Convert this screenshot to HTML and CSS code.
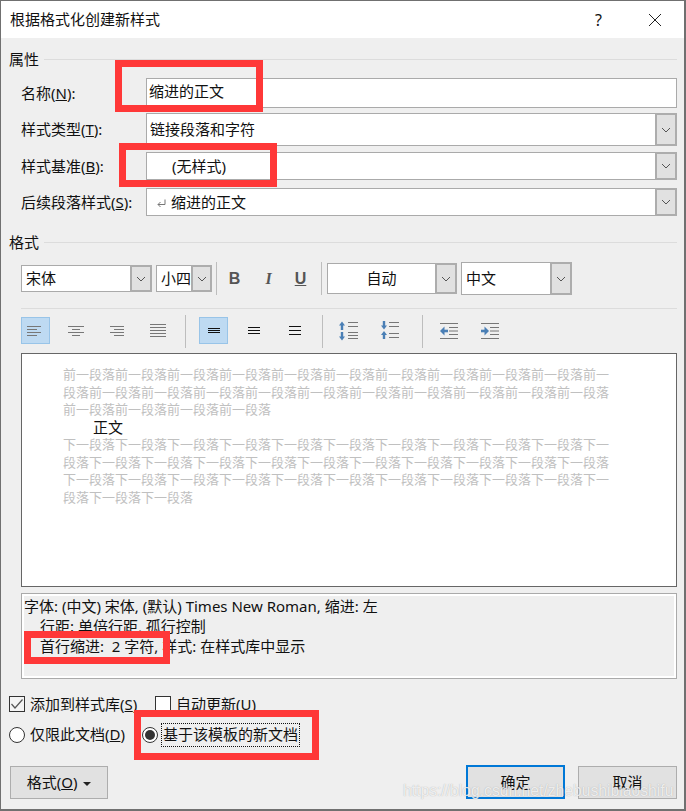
FILE: index.html
```html
<!DOCTYPE html>
<html lang="zh-CN">
<head>
  <meta charset="UTF-8" />
  <title>根据格式化创建新样式</title>
  <link rel="stylesheet" href="styles.css">
</head>
<body>
  <div class="dialog">
    <div class="titlebar">
      <span class="title">根据格式化创建新样式</span>
      <span class="help">?</span>
      <svg class="close" width="14" height="14" viewBox="0 0 14 14"><path d="M1 1L13 13M13 1L1 13" stroke="#222" stroke-width="1" fill="none"/></svg>
    </div>

    <div class="content">
      <div class="group-head"><span>属性</span><i></i></div>
      <div class="props">
        <div class="prop-row name-row">
          <label class="prop-label">名称(<u>N</u>):</label>
          <div class="field name-field">缩进的正文</div>
        </div>
        <div class="prop-row type-row">
          <label class="prop-label">样式类型(<u>T</u>):</label>
          <div class="field select"><span>链接段落和字符</span><b class="arrow"><svg width="10" height="6" viewBox="0 0 10 6"><path d="M1 1L5 5L9 1" stroke="#555" fill="none"/></svg></b></div>
        </div>
        <div class="prop-row base-row">
          <label class="prop-label">样式基准(<u>B</u>):</label>
          <div class="field select"><span class="pad-none">(无样式)</span><b class="arrow"><svg width="10" height="6" viewBox="0 0 10 6"><path d="M1 1L5 5L9 1" stroke="#555" fill="none"/></svg></b></div>
        </div>
        <div class="prop-row next-row">
          <label class="prop-label">后续段落样式(<u>S</u>):</label>
          <div class="field select"><span><svg class="para" width="9" height="9" viewBox="0 0 9 9"><path d="M8 0.5V5.5H1M3.5 3L1 5.5L3.5 8" stroke="#777" fill="none"/></svg>缩进的正文</span><b class="arrow"><svg width="10" height="6" viewBox="0 0 10 6"><path d="M1 1L5 5L9 1" stroke="#555" fill="none"/></svg></b></div>
        </div>
      </div>

      <div class="group-head format-head"><span>格式</span><i></i></div>
      <div class="font-row">
        <div class="field select font-name"><span>宋体</span><b class="arrow"><svg width="10" height="6" viewBox="0 0 10 6"><path d="M1 1L5 5L9 1" stroke="#555" fill="none"/></svg></b></div>
        <div class="field select font-size"><span>小四</span><b class="arrow"><svg width="10" height="6" viewBox="0 0 10 6"><path d="M1 1L5 5L9 1" stroke="#555" fill="none"/></svg></b></div>
        <i class="vsep"></i>
        <span class="txt-btn bold">B</span>
        <span class="txt-btn italic">I</span>
        <span class="txt-btn under">U</span>
        <i class="vsep"></i>
        <div class="field select color-sel"><span>自动</span><b class="arrow"><svg width="10" height="6" viewBox="0 0 10 6"><path d="M1 1L5 5L9 1" stroke="#555" fill="none"/></svg></b></div>
        <div class="field select lang-sel"><span>中文</span><b class="arrow"><svg width="10" height="6" viewBox="0 0 10 6"><path d="M1 1L5 5L9 1" stroke="#555" fill="none"/></svg></b></div>
      </div>
      <div class="hline"></div>
      <div class="para-row">
        <span class="tool on tight shift"><svg width="14" height="10" viewBox="0 0 14 10"><path d="M0 .5H14M0 3.5H10M0 6.5H14M0 9.5H10" stroke="#777"/></svg></span>
        <span class="tool"><svg width="16" height="10" viewBox="0 0 16 10"><path d="M0 .5H16M4 3.5H12M0 6.5H16M4 9.5H12" stroke="#777"/></svg></span>
        <span class="tool"><svg width="14" height="10" viewBox="0 0 14 10"><path d="M0 .5H14M4 3.5H14M0 6.5H14M4 9.5H14" stroke="#777"/></svg></span>
        <span class="tool"><svg width="16" height="13" viewBox="0 0 16 13"><path d="M0 .5H16M0 3.5H16M0 6.5H16M0 9.5H16M0 12.5H16" stroke="#777"/></svg></span>
        <i class="vsep tall"></i>
        <span class="tool on tight"><svg width="12" height="5" viewBox="0 0 12 5"><path d="M0 .5H12M0 2.5H12M0 4.5H12" stroke="#111"/></svg></span>
        <span class="tool"><svg width="12" height="7" viewBox="0 0 12 7"><path d="M0 .5H12M0 3.5H12M0 6.5H12" stroke="#111"/></svg></span>
        <span class="tool"><svg width="12" height="9" viewBox="0 0 12 9"><path d="M0 .5H12M0 4.5H12M0 8.5H12" stroke="#111"/></svg></span>
        <i class="vsep tall close-right"></i>
        <span class="tool"><svg width="19" height="20" viewBox="0 0 19 20"><path d="M3 3V9M3 11V17" stroke="#4a7fb5" stroke-width="2.4"/><path d="M0 4.5L3 .5L6 4.5ZM0 15.5L3 19.5L6 15.5Z" fill="#4a7fb5"/><path d="M9 1.5H19M9 5.5H19M9 11.5H19M9 14.5H19M9 17.5H19" stroke="#777"/></svg></span>
        <span class="tool last"><svg width="18" height="19" viewBox="0 0 18 19"><path d="M3 0V5M3 13V18" stroke="#4a7fb5" stroke-width="2.4"/><path d="M0 4.5H6L3 8.5ZM0 14H6L3 10Z" fill="#4a7fb5"/><path d="M8 1.5H18M8 5.5H18M8 12.5H18M8 16.5H18" stroke="#777"/></svg></span>
        <i class="vsep tall close-right"></i>
        <span class="tool"><svg width="18" height="16" viewBox="0 0 18 16"><path d="M0 .5H18M9 4.5H18M9 8H18M9 11.5H18M0 15.5H18" stroke="#777"/><path d="M8 8H3" stroke="#4a7fb5" stroke-width="2.6"/><path d="M0 8L4.5 3.5V12.5Z" fill="#4a7fb5"/></svg></span>
        <span class="tool"><svg width="18" height="16" viewBox="0 0 18 16"><path d="M0 .5H18M9 4.5H18M9 8H18M9 11.5H18M0 15.5H18" stroke="#777"/><path d="M0 8H5" stroke="#4a7fb5" stroke-width="2.6"/><path d="M8 8L3.5 3.5V12.5Z" fill="#4a7fb5"/></svg></span>
      </div>

      <div class="preview">
        <p class="ghost">前一段落前一段落前一段落前一段落前一段落前一段落前一段落前一段落前一段落前一段落前一段落前一段落前一段落前一段落前一段落前一段落前一段落前一段落前一段落前一段落前一段落前一段落前一段落前一段落前一段落</p>
        <p class="sample">正文</p>
        <p class="ghost">下一段落下一段落下一段落下一段落下一段落下一段落下一段落下一段落下一段落下一段落下一段落下一段落下一段落下一段落下一段落下一段落下一段落下一段落下一段落下一段落下一段落下一段落下一段落下一段落下一段落下一段落下一段落下一段落下一段落下一段落下一段落下一段落下一段落下一段落</p>
      </div>

      <div class="desc">
        <div>字体: (中文) 宋体, (默认) Times New Roman, 缩进: 左</div>
        <div class="ind">行距: 单倍行距, 孤行控制</div>
        <div class="ind">首行缩进:&nbsp; 2 字符, 样式: 在样式库中显示</div>
      </div>

      <div class="opts">
        <span class="check on"><svg width="14" height="12" viewBox="0 0 14 12"><path d="M1.5 6L5 10L12.5 1.5" stroke="#555" stroke-width="1.2" fill="none"/></svg></span>
        <span class="opt-text first-check">添加到样式库(<u>S</u>)</span>
        <span class="check"></span>
        <span class="opt-text">自动更新(<u>U</u>)</span>
      </div>
      <div class="opts radios">
        <span class="radio"></span>
        <span class="opt-text first-radio">仅限此文档(<u>D</u>)</span>
        <span class="radio on"></span>
        <span class="opt-text focus">基于该模板的新文档</span>
      </div>

      <div class="footer">
        <button class="btn fmt">格式(<u>O</u>) <em class="caret"></em></button>
        <button class="btn ok">确定</button>
        <button class="btn">取消</button>
      </div>
    </div>

    <!-- red marks drawn on top of the screenshot -->
    <span class="mark m1"></span>
    <span class="mark m2"></span>
    <span class="mark m3"></span>
    <span class="mark m4"></span>
    <span class="watermark">https://blog.csdn.net/zhebushibiaoshifu</span>
  </div>
</body>
</html>
```
FILE: styles.css
```css
* {
  box-sizing: border-box;
}

body {
  margin: 0;
  width: 686px;
  height: 811px;
  overflow: hidden;
  font-family: "Noto Sans", "Noto Sans CJK SC", sans-serif;
  font-size: 15px;
  color: #111;
}

.dialog {
  position: relative;
  width: 686px;
  height: 811px;
  background: #efefef;
  border: 1px solid #707070;
  border-width: 1px 2px 2px 1px;
}

.titlebar {
  height: 37px;
  background: #fff;
  display: flex;
  align-items: center;
  padding-left: 9px;
}

.title {
  flex: 1;
  padding-bottom: 2px;
}

.help {
  font-size: 16px;
  margin-right: 46px;
}

.close {
  margin-right: 22px;
}

.content {
  padding: 0 7px 0 8px;
}

.group-head {
  display: flex;
  align-items: center;
  height: 22px;
  margin-top: 10px;
}

.group-head span {
  padding-bottom: 2px;
}

.group-head i {
  flex: 1;
  height: 1px;
  background: #dcdcdc;
  margin-left: 5px;
}

.props {
  margin-top: 8px;
}

.prop-row {
  display: flex;
  align-items: center;
}

.name-row {
  height: 30px;
  margin-bottom: 5px;
}

.type-row {
  height: 33px;
  margin-bottom: 6px;
}

.base-row {
  height: 28px;
  margin-bottom: 8px;
}

.next-row {
  height: 28px;
}

.prop-label {
  width: 137px;
  padding: 0 0 2px 12px;
  white-space: pre;
}

.prop-row .field {
  flex: 1;
  align-self: stretch;
}

.field {
  background: #fff;
  border: 1px solid #aaa;
  display: flex;
  align-items: center;
}

.select {
  justify-content: space-between;
}

.select > span {
  flex: 1;
  white-space: nowrap;
  padding-bottom: 2px;
}

.name-field {
  padding: 0 0 5px 2px;
}

.type-row .select {
  padding-left: 3px;
}

.pad-none {
  padding-left: 25px;
}

.para {
  margin: 0 5px 0 10px;
}

.arrow {
  width: 22px;
  align-self: stretch;
  margin: -1px -1px -1px 0;
  background: #e1e1e1;
  border: 2px solid #adadad;
  display: flex;
  align-items: center;
  justify-content: center;
}

.format-head {
  margin-top: 15px;
}

.font-row {
  display: flex;
  align-items: center;
  margin-top: 9px;
  height: 33px;
  padding-left: 12px;
}

.font-name {
  width: 131px;
  height: 27px;
  padding-left: 4px;
  margin-right: 4px;
}

.font-size {
  width: 56px;
  height: 27px;
  padding-left: 4px;
}

.font-size .arrow {
  width: 21px;
}

.vsep {
  width: 1px;
  height: 33px;
  background: #bdbdbd;
  margin-left: 4px;
}

.txt-btn {
  width: 33px;
  text-align: center;
  font: bold 16px "Liberation Sans", sans-serif;
  color: #555;
  margin-left: 1px;
}

.italic {
  font-style: italic;
  font-family: "Liberation Serif", serif;
}

.under {
  text-decoration: underline;
  margin-left: -1px;
}

.color-sel {
  width: 130px;
  height: 31px;
  margin-left: 5px;
  text-align: center;
}

.lang-sel {
  width: 111px;
  height: 33px;
  margin-left: 4px;
  padding-left: 4px;
}

.hline {
  height: 1px;
  background: #dcdcdc;
  margin: 13px 0 0 12px;
}

.para-row {
  display: flex;
  align-items: center;
  height: 33px;
  padding-left: 12px;
  margin-top: 6px;
}

.tool {
  width: 29px;
  height: 27px;
  margin: 0 12px 2px 0;
  display: flex;
  align-items: center;
  justify-content: center;
  border: 1px solid transparent;
}

.tool.tight {
  margin-right: 11px;
}

.tool.shift {
  padding-right: 3px;
}

.tool.last {
  margin-right: 17px;
}

.tool.on {
  background: #bedaf2;
  border-color: #98c4e8;
}

.vsep.tall {
  margin: 0 13px 0 1px;
}

.vsep.close-right {
  margin-right: 11px;
}

.preview {
  margin: 5px 0 0 12px;
  height: 234px;
  background: #fff;
  border: 1px solid #666;
  padding: 12px 0 0 41px;
  font-size: 13px;
  line-height: 17.5px;
}

.preview p {
  margin: 0;
  width: 547px;
}

.ghost {
  color: #c0c0c0;
}

.sample {
  color: #111;
  font-size: 15px;
  padding-left: 30px;
}

.desc {
  margin: 6px 0 0 12px;
  height: 86px;
  background: #efefef;
  border: 1px solid #aaa;
  outline: 2px solid #fff;
  outline-offset: -3px;
  padding: 2px 0 0 2px;
  line-height: 20px;
}

.ind {
  padding-left: 16px;
}

.opts {
  display: flex;
  align-items: center;
  height: 20px;
  margin-top: 15px;
}

.radios {
  margin-top: 11px;
}

.opt-text {
  padding-bottom: 2px;
}

.radios .opt-text {
  padding-bottom: 4px;
}

.check {
  width: 16px;
  height: 16px;
  border: 1px solid #333;
  background: #fff;
  display: flex;
  align-items: center;
  justify-content: center;
  margin-right: 5px;
}

.check.on {
  background: #f4f4f4;
}

.radio {
  width: 16px;
  height: 16px;
  border: 1px solid #333;
  border-radius: 50%;
  background: #fff;
  margin-right: 5px;
  position: relative;
}

.radio.on {
  margin-right: 4px;
}

.radio.on::after {
  content: "";
  position: absolute;
  left: 2px;
  top: 2px;
  width: 10px;
  height: 10px;
  border-radius: 50%;
  background: #333;
}

.first-check {
  width: 125px;
}

.first-radio {
  width: 112px;
}

.radios .focus {
  outline: 1px dotted #111;
  line-height: 20px;
  padding: 0 1px 2px;
}

.footer {
  display: flex;
  align-items: flex-end;
  height: 34px;
  margin-top: 20px;
  padding-left: 1px;
}

.btn {
  width: 99px;
  height: 33px;
  background: #e1e1e1;
  border: 1px solid #adadad;
  font: inherit;
  color: #111;
  margin-left: 13px;
  padding: 0 0 2px;
}

.fmt {
  width: 98px;
  margin: 0 auto 0 0;
}

.ok {
  height: 34px;
  border: 2px solid #0078d7;
}

.caret {
  display: inline-block;
  border: 4px solid transparent;
  border-top-color: #222;
  border-bottom: 0;
  vertical-align: middle;
  margin-left: 2px;
}

.mark {
  position: absolute;
  border: 7px solid #ff3838;
}

/* marks are offset by the dialog's 1px border */
.m1 {
  left: 114px;
  top: 59px;
  width: 148px;
  height: 52px;
}

.m2 {
  left: 118px;
  top: 142px;
  width: 158px;
  height: 44px;
}

.m3 {
  left: 23px;
  top: 630px;
  width: 146px;
  height: 33px;
}

.m4 {
  left: 133px;
  top: 709px;
  width: 185px;
  height: 50px;
}

.watermark {
  position: absolute;
  left: 402px;
  top: 781px;
  font: 15.7px "Liberation Sans", sans-serif;
  color: rgba(255, 255, 255, 0.8);
  text-shadow: 0 0 1px rgba(120, 120, 120, 0.6);
  white-space: nowrap;
}
```
